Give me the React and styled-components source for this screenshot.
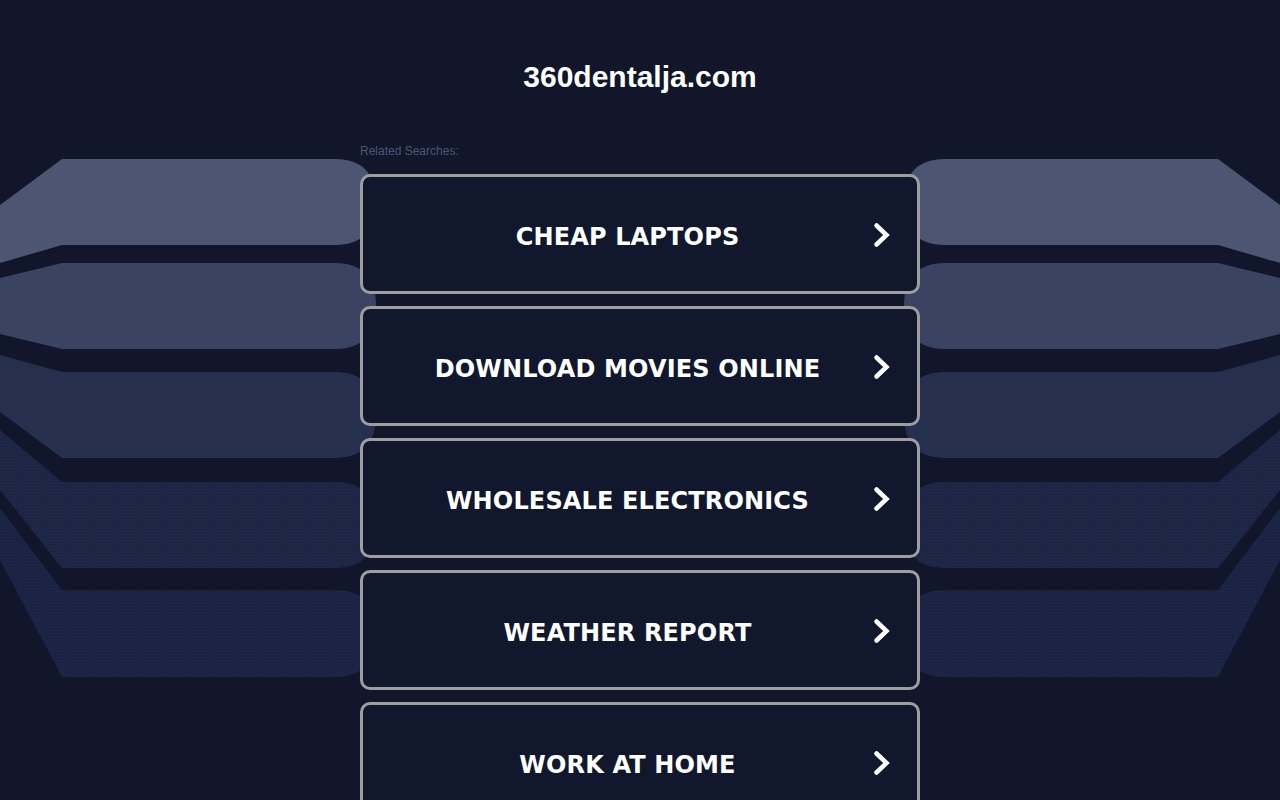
import React from "react";
import styled, { createGlobalStyle } from "styled-components";

const GlobalStyle = createGlobalStyle`
  html {
    scrollbar-width: none;
  }
  html::-webkit-scrollbar {
    display: none;
  }
  body {
    margin: 0;
    background: #11162a;
    font-family: "Liberation Sans", Arial, sans-serif;
  }
`;

const searches = [
  "CHEAP LAPTOPS",
  "DOWNLOAD MOVIES ONLINE",
  "WHOLESALE ELECTRONICS",
  "WEATHER REPORT",
  "WORK AT HOME",
];

// left-hand band outlines; the right side is the mirror image
const bands = [
  { top: 159, bottom: 245, leftTop: 205, leftBottom: 263, color: "#4c5572" },
  { top: 263, bottom: 349, leftTop: 278, leftBottom: 334, color: "#3a4362" },
  { top: 372, bottom: 458, leftTop: 355, leftBottom: 412, color: "#262f4e" },
  { top: 482, bottom: 568, leftTop: 430, leftBottom: 490, color: "#1d2545" },
  { top: 590, bottom: 677, leftTop: 508, leftBottom: 560, color: "#1b2344" },
];

function bandPath(b) {
  const mid = (b.top + b.bottom) / 2;
  return `M0 ${b.leftTop} L62 ${b.top} L335 ${b.top} C362 ${b.top} 376 ${
    b.top + 14
  } 376 ${mid} C376 ${b.bottom - 14} 362 ${b.bottom} 335 ${b.bottom} L62 ${
    b.bottom
  } L0 ${b.leftBottom} Z`;
}

const mirror = "translate(1280 0) scale(-1 1)";

function Backdrop() {
  return (
    <BackdropSvg viewBox="0 0 1280 800" preserveAspectRatio="xMidYMin slice">
      <defs>
        <pattern id="dots" width="3" height="3" patternUnits="userSpaceOnUse">
          <rect width="1" height="1" fill="#3a4670" opacity="0.22" />
        </pattern>
      </defs>
      {bands.map((b, i) => (
        <g key={i}>
          <path d={bandPath(b)} fill={b.color} />
          <path d={bandPath(b)} fill={b.color} transform={mirror} />
          {i > 2 && (
            <>
              <path d={bandPath(b)} fill="url(#dots)" />
              <path d={bandPath(b)} fill="url(#dots)" transform={mirror} />
            </>
          )}
        </g>
      ))}
    </BackdropSvg>
  );
}

function Chevron() {
  return (
    <ChevronSvg viewBox="0 0 18 26" width="18" height="26">
      <polyline
        points="3.5,3.5 13.5,13 3.5,22.5"
        fill="none"
        stroke="#fff"
        strokeWidth="4.5"
        strokeLinecap="round"
        strokeLinejoin="miter"
      />
    </ChevronSvg>
  );
}

export default function App() {
  return (
    <Page>
      <GlobalStyle />
      <Backdrop />
      <Content>
        <Title>360dentalja.com</Title>
        <Label>Related Searches:</Label>
        <List>
          {searches.map((s) => (
            <Card key={s} href="#">
              <CardText>{s}</CardText>
              <Chevron />
            </Card>
          ))}
        </List>
      </Content>
    </Page>
  );
}

const Page = styled.div`
  position: relative;
  min-height: 800px;
  overflow: hidden;
`;

const BackdropSvg = styled.svg`
  position: absolute;
  top: 0;
  left: 0;
  width: 100%;
  height: 800px;
  z-index: 0;
`;

const Content = styled.main`
  position: relative;
  z-index: 1;
  width: 560px;
  margin: 0 auto;
  padding-top: 59px;
`;

const Title = styled.h1`
  margin: 0;
  height: 36px;
  line-height: 36px;
  font-size: 30px;
  font-weight: bold;
  color: #ffffff;
  text-align: center;
`;

const Label = styled.div`
  margin-top: 49px;
  font-size: 12px;
  line-height: 14px;
  color: #4b5675;
`;

const List = styled.div`
  display: flex;
  flex-direction: column;
  gap: 12px;
  margin-top: 16px;
`;

const Card = styled.a`
  display: flex;
  align-items: center;
  box-sizing: border-box;
  height: 120px;
  padding: 6px 26px 0 19px;
  border: 3px solid #9e9e9e;
  border-radius: 10px;
  background: #11172c;
  text-decoration: none;
`;

const CardText = styled.span`
  flex: 1;
  text-align: center;
  font-family: "DejaVu Sans", Verdana, sans-serif;
  font-weight: bold;
  font-size: 24px;
  letter-spacing: 0.15px;
  color: #ffffff;
`;

const ChevronSvg = styled.svg`
  flex: none;
  display: block;
  margin-top: -4px;
`;
